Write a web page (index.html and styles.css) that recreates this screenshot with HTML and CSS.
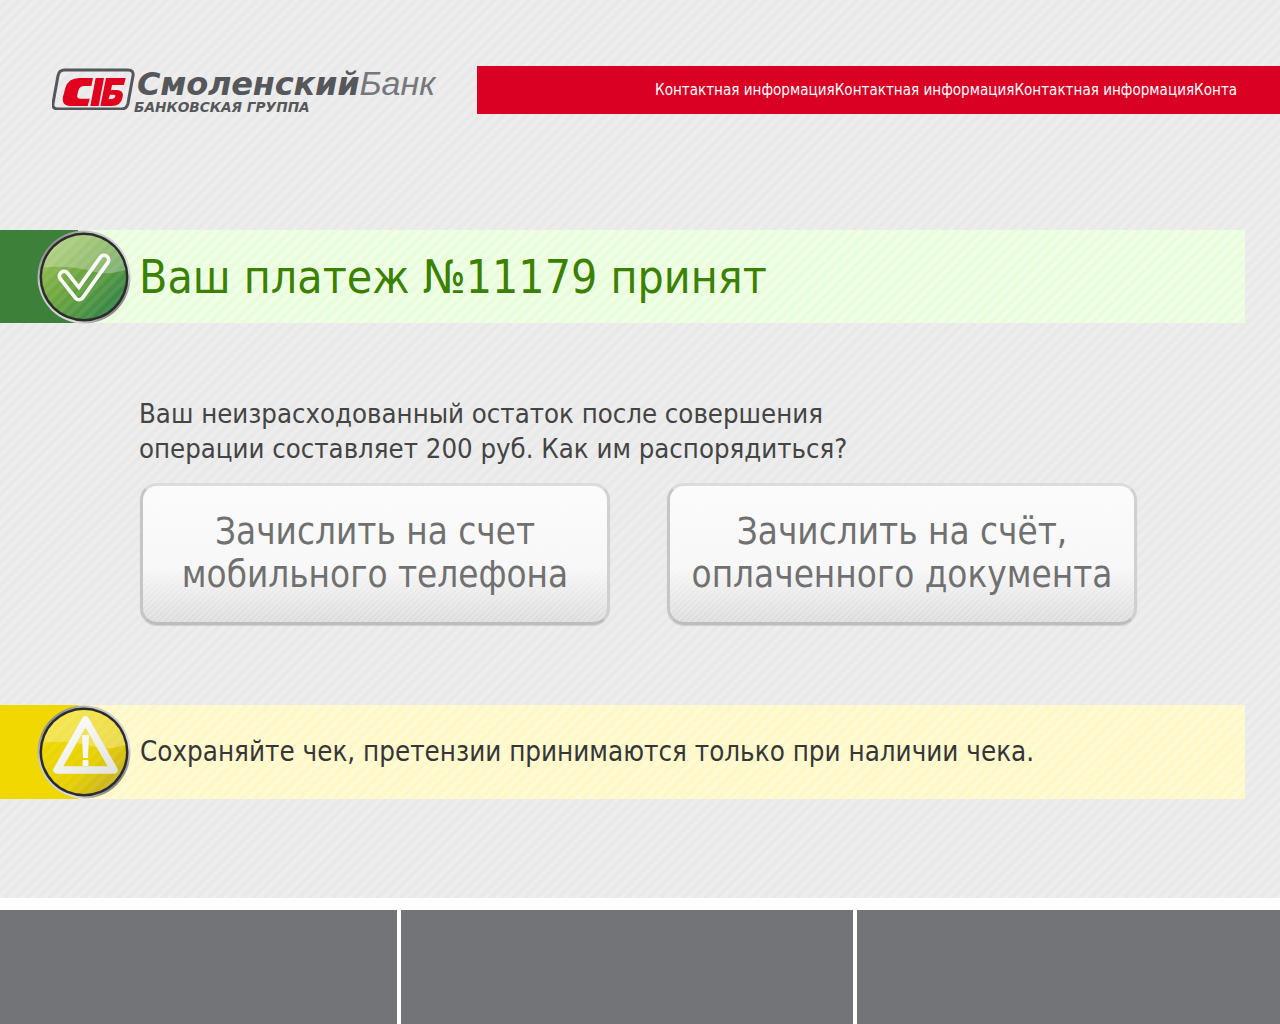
FILE: index.html
```html
<!DOCTYPE html>
<html lang="ru">
<head>
<meta charset="utf-8">
<title>Смоленский Банк</title>
<link rel="stylesheet" href="styles.css">
</head>
<body>
<div class="page">
  <header class="header">
    <div class="logo">
      <svg class="logo-mark" width="84" height="42" viewBox="12 12 252 126">
        <path d="M50 18 H240 Q258 18 255 35 L240 118 Q236 135 220 135 H30 Q12 135 15 118 L30 35 Q33 18 50 18 Z" fill="none" stroke="#55575a" stroke-width="9"/>
        <path d="M95 42 H135 L130 66 H108 Q95 66 91 80 L88 92 Q85 104 98 104 H125 L119 126 H70 Q40 126 45 98 L52 72 Q60 42 95 42 Z" fill="#e1001e"/>
        <path d="M143 42 H168 L152 126 H127 Z" fill="#e1001e"/>
        <path fill-rule="evenodd" d="M174 42 H233 L228 63 H192 L189 78 H205 Q228 78 224 98 Q220 126 190 126 H157 Z M186 92 H198 Q203 92 202 97 Q200 105 190 105 H182 Z" fill="#e1001e"/>
      </svg>
      <div class="logo-text">
        <div class="logo-name"><span class="logo-bold">Смоленский</span><span class="logo-light">Банк</span></div>
        <div class="logo-sub">БАНКОВСКАЯ ГРУППА</div>
      </div>
    </div>
    <nav class="nav">
      <a class="nav-link">Контактная информация</a>
      <a class="nav-link">Контактная информация</a>
      <a class="nav-link">Контактная информация</a>
      <a class="nav-link">Конта</a>
    </nav>
  </header>

  <section class="band band-ok">
    <svg class="badge" width="94" height="94" viewBox="0 0 94 94">
      <defs>
        <linearGradient id="gGreen" x1="0" y1="0" x2="1" y2="1">
          <stop offset="0" stop-color="#a3c95a"/>
          <stop offset="0.45" stop-color="#6ea63f"/>
          <stop offset="1" stop-color="#237a48"/>
        </linearGradient>
        <linearGradient id="gRing" x1="0" y1="0" x2="1" y2="1">
          <stop offset="0" stop-color="#5a5a5a"/>
          <stop offset="0.3" stop-color="#c5c5c5"/>
          <stop offset="0.7" stop-color="#dcdcdc"/>
          <stop offset="1" stop-color="#333"/>
        </linearGradient>
        <pattern id="pStripe" width="8" height="8" patternUnits="userSpaceOnUse" patternTransform="rotate(45)">
          <rect width="4" height="8" fill="#fff" fill-opacity="0.07"/>
        </pattern>
        <clipPath id="cDisc"><circle cx="47" cy="47" r="42"/></clipPath>
        <mask id="mCheck" maskUnits="userSpaceOnUse" x="0" y="0" width="94" height="94">
          <path d="M27 46 L42 65 L67 30" fill="none" stroke="#fff" stroke-width="13" stroke-linecap="round" stroke-linejoin="round"/>
          <path d="M27 46 L42 65 L67 30" fill="none" stroke="#000" stroke-width="5.500" stroke-linecap="round" stroke-linejoin="round"/>
        </mask>
      </defs>
      <circle cx="47" cy="47" r="46.500" fill="url(#gRing)"/>
      <circle cx="47" cy="47" r="44.500" fill="#2a2d2b"/>
      <circle cx="47" cy="47" r="42" fill="url(#gGreen)"/>
      <g clip-path="url(#cDisc)">
        <path d="M0 0 H94 V38 Q72 46 58 42 Q30 34 0 38 Z" fill="#fff" fill-opacity="0.28"/>
        <rect width="94" height="94" fill="url(#pStripe)"/>
      </g>
      <rect width="94" height="94" fill="#f9faf6" mask="url(#mCheck)"/>
    </svg>
    <h1 class="title">Ваш платеж №11179 принят</h1>
  </section>

  <main class="content">
    <p class="message">Ваш неизрасходованный остаток после совершения<br>операции составляет 200 руб. Как им распорядиться?</p>
    <div class="actions">
      <button class="btn">Зачислить на счет<br>мобильного телефона</button>
      <button class="btn">Зачислить на счёт,<br>оплаченного документа</button>
    </div>
  </main>

  <section class="band band-warn">
    <svg class="badge" width="94" height="94" viewBox="0 0 94 94">
      <defs>
        <linearGradient id="gYellow" x1="0" y1="0" x2="1" y2="1">
          <stop offset="0" stop-color="#f3dd00"/>
          <stop offset="0.6" stop-color="#e6cf00"/>
          <stop offset="1" stop-color="#b8a330"/>
        </linearGradient>
        <linearGradient id="gRing2" x1="0" y1="0" x2="1" y2="1">
          <stop offset="0" stop-color="#5a5a5a"/>
          <stop offset="0.3" stop-color="#c5c5c5"/>
          <stop offset="0.7" stop-color="#dcdcdc"/>
          <stop offset="1" stop-color="#333"/>
        </linearGradient>
        <linearGradient id="gTri" x1="0" y1="0" x2="1" y2="1">
          <stop offset="0" stop-color="#ffffff"/>
          <stop offset="1" stop-color="#e4e4de"/>
        </linearGradient>
        <pattern id="pStripe2" width="8" height="8" patternUnits="userSpaceOnUse" patternTransform="rotate(45)">
          <rect width="4" height="8" fill="#fff" fill-opacity="0.07"/>
        </pattern>
        <clipPath id="cDisc2"><circle cx="47" cy="47" r="42"/></clipPath>
      </defs>
      <circle cx="47" cy="47" r="46.500" fill="url(#gRing2)"/>
      <circle cx="47" cy="47" r="44.500" fill="#2a2d2b"/>
      <circle cx="47" cy="47" r="42" fill="url(#gYellow)"/>
      <g clip-path="url(#cDisc2)">
        <path d="M0 0 H94 V38 Q72 46 58 42 Q30 34 0 38 Z" fill="#fff" fill-opacity="0.3"/>
        <rect width="94" height="94" fill="url(#pStripe2)"/>
      </g>
      <path d="M48.500 15 L20 65 H77 Z" fill="none" stroke="url(#gTri)" stroke-width="7.500" stroke-linejoin="round"/>
      <path d="M45 30 H52 L51 53 H46 Z" fill="#f6f6f2"/>
      <rect x="45.500" y="55" width="6" height="6" rx="1" fill="#f6f6f2"/>
    </svg>
    <p class="warn-text">Сохраняйте чек, претензии принимаются только при наличии чека.</p>
  </section>

  <footer class="footer">
    <div class="foot-cell foot-a"></div>
    <div class="foot-cell foot-b"></div>
    <div class="foot-cell foot-c"></div>
  </footer>
</div>
</body>
</html>
```
FILE: styles.css
```css
* { box-sizing: border-box; }
html, body { margin: 0; padding: 0; }
body { font-family: "DejaVu Sans", sans-serif; font-stretch: condensed; background: #ebebeb; }

.page {
  width: 1280px;
  height: 1024px;
  overflow: hidden;
  display: flex;
  flex-direction: column;
  background-color: #e9e9e9;
  background-image: repeating-linear-gradient(135deg, rgba(255,255,255,0.2) 0 4px, rgba(255,255,255,0) 4px 8px);
}

.header {
  height: 48px;
  margin-top: 66px;
  display: flex;
  flex-shrink: 0;
}
.logo {
  width: 477px;
  padding-left: 52px;
  display: flex;
  align-items: flex-start;
}
.logo-mark { flex-shrink: 0; margin-top: 2px; }
.logo-text { margin-left: -2px; padding-top: 2px; }
.logo-name { display: flex; align-items: baseline; height: 32px; white-space: nowrap; margin-left: 3px; color: #55575a; }
.logo-bold { display: block; line-height: 30px; font-family: "DejaVu Sans", sans-serif; font-stretch: normal; font-style: italic; font-weight: 700; font-size: 32px; letter-spacing: -0.2px; }
.logo-light { display: block; line-height: 30px; font-family: "Liberation Sans", sans-serif; font-style: italic; font-size: 34px; color: #75777a; font-weight: 400; }
.logo-sub { font-family: "DejaVu Sans", sans-serif; font-stretch: normal; font-style: italic; font-weight: 700; font-size: 13.700px; line-height: 14px; color: #55575a; white-space: nowrap; }

.nav {
  flex: 1;
  background: #d90024;
  display: flex;
  align-items: center;
  padding: 0 43px 0 178px;
  overflow: hidden;
}
.nav-link { color: #fff; font-size: 15.080px; white-space: nowrap; flex-shrink: 0; }

.band {
  width: 1245px;
  display: flex;
  align-items: center;
  padding-left: 37px;
  flex-shrink: 0;
}
.band-ok {
  height: 93px;
  margin-top: 116px;
  background:
    linear-gradient(to right, #3c8039 78px, transparent 78px),
    repeating-linear-gradient(135deg, rgba(255,255,255,0.35) 0 4px, rgba(255,255,255,0) 4px 8px),
    #e8fedb;
}
.band-warn {
  height: 94px;
  margin-top: 80px;
  background:
    linear-gradient(to right, #f1d800 78px, transparent 78px),
    repeating-linear-gradient(135deg, rgba(255,255,255,0.3) 0 4px, rgba(255,255,255,0) 4px 8px),
    #fff8c4;
}
.badge { flex-shrink: 0; }

.title { margin: 0 0 0 8px; font-size: 46px; font-weight: 400; color: #3c8000; line-height: 52px; white-space: nowrap; }
.warn-text { margin: 0 0 2px 9px; font-size: 27.500px; line-height: 32px; color: #363636; white-space: nowrap; }

.content { margin-top: 73px; padding-left: 139px; flex-shrink: 0; }
.message { margin: 0; font-size: 27.300px; line-height: 35px; color: #444; white-space: nowrap; }
.actions { display: flex; gap: 57px; margin-top: 17px; padding-left: 1px; }
.btn {
  width: 470px;
  height: 142px;
  border: 3px solid;
  border-color: #dcdcdc #d0d0d0 #bdbdbd #c6c6c6;
  border-radius: 17px;
  background:
    repeating-linear-gradient(135deg, rgba(255,255,255,0.2) 0 2px, rgba(255,255,255,0) 2px 4px),
    linear-gradient(to bottom, #fbfbfb 0%, #f7f7f7 60%, #dcdcdc 100%);
  box-shadow: 0 1px 1px rgba(0,0,0,0.12);
  font-family: "DejaVu Sans", sans-serif;
  font-stretch: condensed;
  font-size: 36.500px;
  line-height: 43px;
  color: #707070;
  padding: 0 0 3px;
}

.footer {
  margin-top: 99px;
  height: 126px;
  background: #fff;
  padding-top: 12px;
  display: flex;
  gap: 4px;
  flex-shrink: 0;
}
.foot-cell { background: #737478; height: 114px; }
.foot-a { width: 397px; }
.foot-b { width: 452px; }
.foot-c { flex: 1; }
```
